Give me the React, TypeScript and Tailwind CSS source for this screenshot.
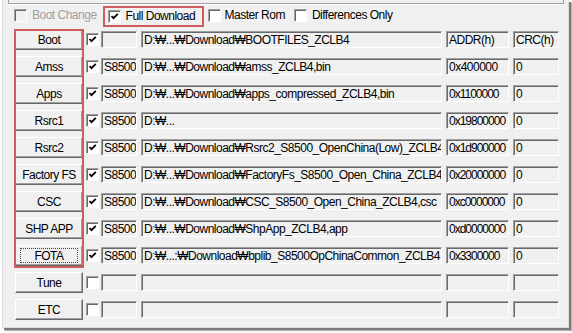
import React from "react";

type Row = {
  name: string;
  checked: boolean;
  model: string;
  path: string;
  addr: string;
  crc: string;
};

const rows: Row[] = [
  { name: "Boot", checked: true, model: "", path: "D:₩...₩Download₩BOOTFILES_ZCLB4", addr: "ADDR(h)", crc: "CRC(h)" },
  { name: "Amss", checked: true, model: "S8500", path: "D:₩...₩Download₩amss_ZCLB4,bin", addr: "0x400000", crc: "0" },
  { name: "Apps", checked: true, model: "S8500", path: "D:₩...₩Download₩apps_compressed_ZCLB4,bin", addr: "0x1100000", crc: "0" },
  { name: "Rsrc1", checked: true, model: "S8500", path: "D:₩...", addr: "0x19800000", crc: "0" },
  { name: "Rsrc2", checked: true, model: "S8500", path: "D:₩...₩Download₩Rsrc2_S8500_OpenChina(Low)_ZCLB4", addr: "0x1d900000", crc: "0" },
  { name: "Factory FS", checked: true, model: "S8500", path: "D:₩...₩Download₩FactoryFs_S8500_Open_China_ZCLB4,", addr: "0x20000000", crc: "0" },
  { name: "CSC", checked: true, model: "S8500", path: "D:₩...₩Download₩CSC_S8500_Open_China_ZCLB4,csc", addr: "0xc0000000", crc: "0" },
  { name: "SHP APP", checked: true, model: "S8500", path: "D:₩...₩Download₩ShpApp_ZCLB4,app", addr: "0xd0000000", crc: "0" },
  { name: "FOTA", checked: true, model: "S8500", path: "D:₩...:₩Download₩bplib_S8500OpChinaCommon_ZCLB4", addr: "0x3300000", crc: "0" },
  { name: "Tune", checked: false, model: "", path: "", addr: "", crc: "" },
  { name: "ETC", checked: false, model: "", path: "", addr: "", crc: "" },
];

function CheckBox({ checked, disabled }: { checked: boolean; disabled?: boolean }) {
  return (
    <div
      className={
        "w-[13px] h-[13px] shrink-0 border border-t-[#a0a0a0] border-l-[#a0a0a0] border-b-white border-r-white shadow-[inset_1px_1px_0_#696969] flex items-center justify-center " +
        (disabled ? "bg-[#f0f0f0]" : "bg-white")
      }
    >
      {checked ? (
        <svg width="9" height="9" viewBox="0 0 9 9">
          <path d="M1.5 4 L3.5 6.2 L7.8 1.8" fill="none" stroke="#000" strokeWidth="1.8" />
        </svg>
      ) : null}
    </div>
  );
}

function Field({ text, width, tight }: { text: string; width: string; tight?: boolean }) {
  return (
    <div
      className={
        "h-[17px] shrink-0 bg-[#f0f0f0] border border-t-[#a0a0a0] border-l-[#a0a0a0] border-b-white border-r-white shadow-[inset_1px_1px_0_#696969] pl-[2px] pt-[1px] overflow-hidden whitespace-nowrap leading-[14px] " +
        (tight ? "tracking-[-1px] " : "") +
        width
      }
    >
      {text}
    </div>
  );
}

export default function App() {
  return (
    <div
      className="w-[572px] h-[333px] bg-white text-[12px] tracking-[-0.5px] text-black overflow-hidden"
      style={{ fontFamily: '"Liberation Sans", "Noto Sans CJK KR", sans-serif' }}
    >
      <div className="relative ml-[2px] w-[567px] h-[328px] bg-[#f0f0f0] border-x border-b border-[#dcdcdc] shadow-[2px_2px_0_#7c7c7c,3px_3px_1px_#b4b4b4]">
        {/* group box above, only its bottom edge shows */}
        <div className="ml-[5px] w-[556px] h-[4px] border-x border-b border-[#a0a0a0] shadow-[0_1px_0_#fff]" />

        {/* option checkboxes */}
        <div className="h-[22px] flex items-center pl-[11px]">
          <div className="flex items-center gap-[3px]">
            <CheckBox checked={false} disabled />
            <span className="text-[#a0a0a0] ml-[2px]">Boot Change</span>
          </div>
          <div className="ml-[6px] h-[21px] w-[101px] border-2 border-[#cf5c5e] flex items-center pl-[3px] mt-[2px]">
            <CheckBox checked />
            <span className="ml-[5px]">Full Download</span>
          </div>
          <div className="ml-[4px] flex items-center">
            <CheckBox checked={false} />
            <span className="ml-[4px]">Master Rom</span>
          </div>
          <div className="ml-[9px] flex items-center">
            <CheckBox checked={false} />
            <span className="ml-[5px]">Differences Only</span>
          </div>
        </div>

        {/* file rows */}
        <div className="flex flex-col pl-[12px]">
          {rows.map((r) => (
            <div key={r.name} className="h-[27px] flex items-center">
              <div className="w-[68px] h-[21px] shrink-0 border border-t-white border-l-white border-b-[#696969] border-r-[#696969] shadow-[inset_-1px_-1px_0_#a0a0a0] flex items-center justify-center">
                {r.name === "FOTA" ? (
                  <span className="border border-dotted border-[#444] w-[58px] h-[15px] flex items-center justify-center">
                    {r.name}
                  </span>
                ) : (
                  r.name
                )}
              </div>
              <div className="ml-[3px]">
                <CheckBox checked={r.checked} />
              </div>
              <div className="ml-[2px]">
                <Field text={r.model} width="w-[36px]" />
              </div>
              <div className="ml-[4px]">
                <Field text={r.path} width="w-[301px]" />
              </div>
              <div className="ml-[4px]">
                <Field text={r.addr} width="w-[63px]" tight={r.addr.length > 8} />
              </div>
              <div className="ml-[4px]">
                <Field text={r.crc} width="w-[46px]" />
              </div>
            </div>
          ))}
        </div>

        {/* red highlight around the selected images */}
        <div className="absolute left-[11px] top-[29px] w-[70px] h-[239px] border-2 border-[#cf5c5e] pointer-events-none" />
      </div>
    </div>
  );
}
